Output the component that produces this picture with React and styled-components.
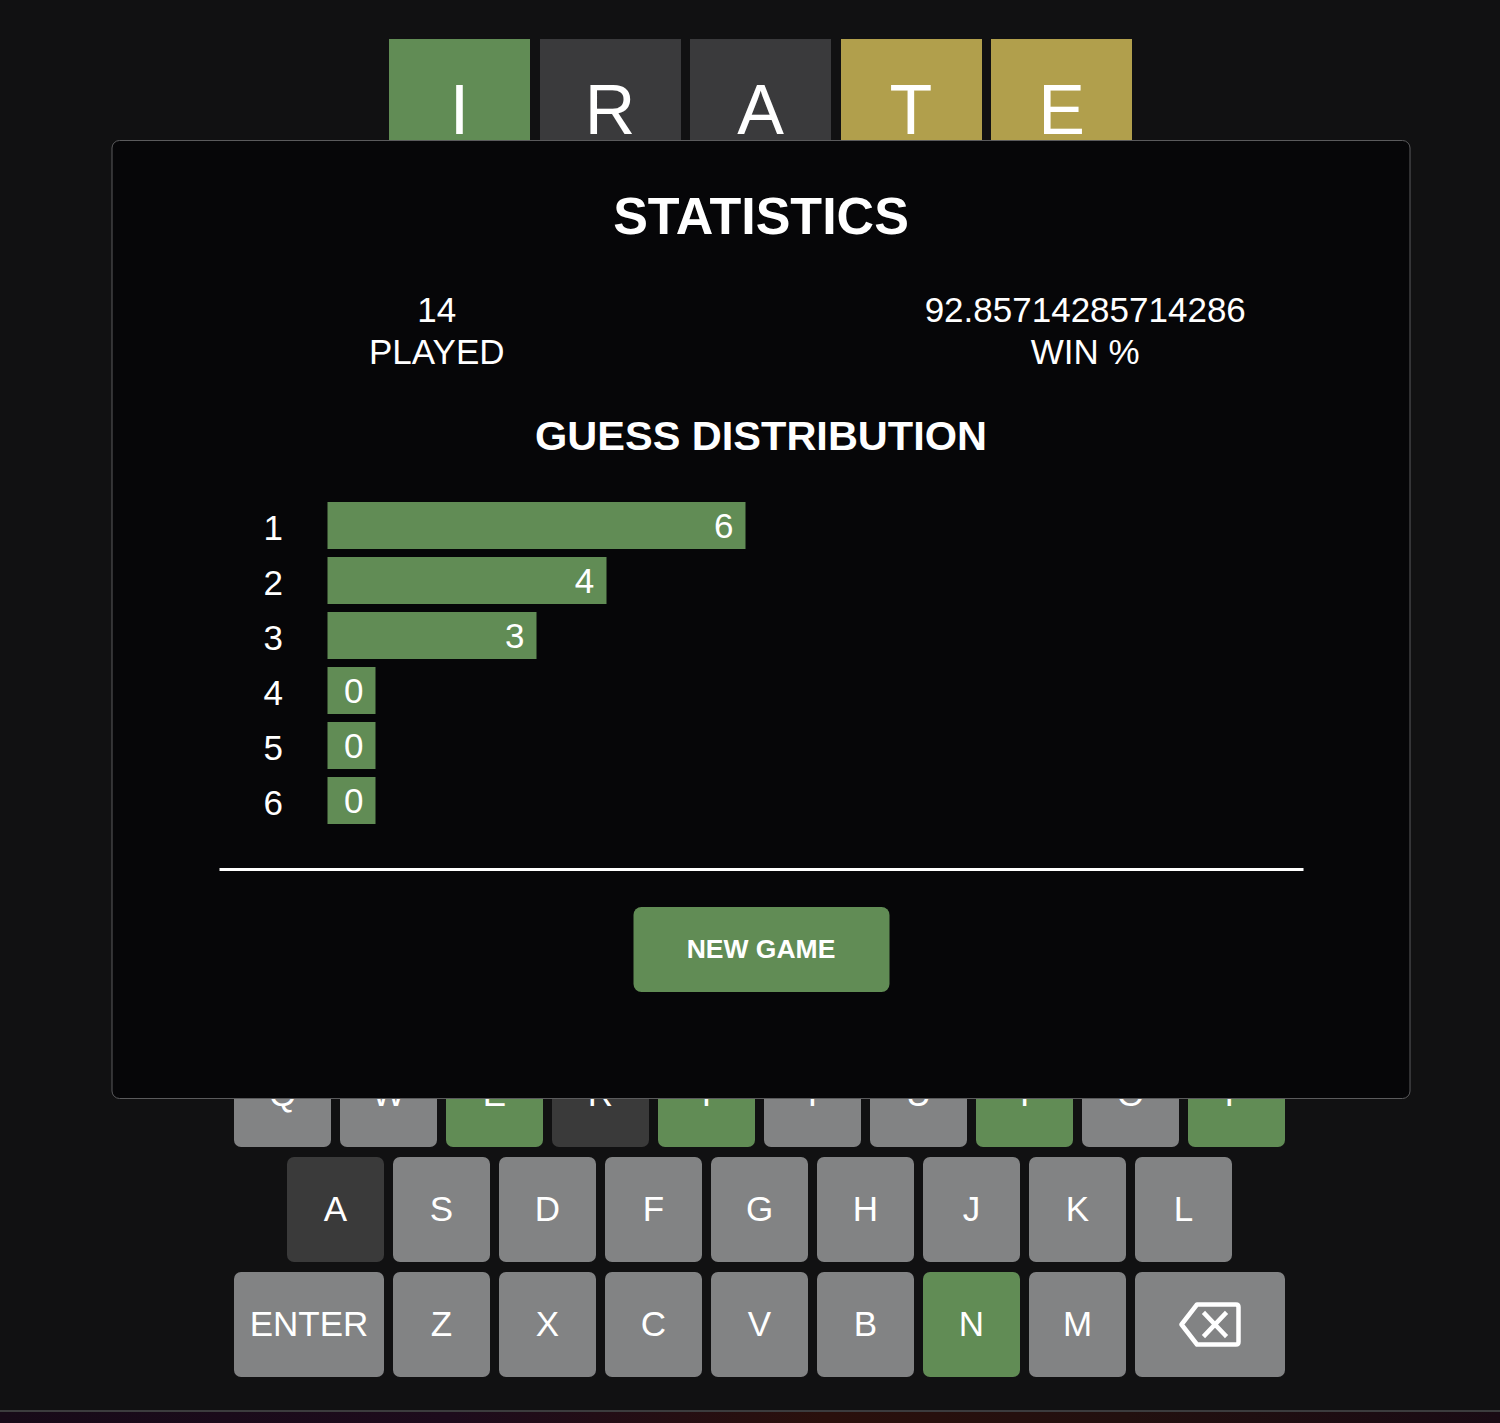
import React from 'react';
import styled, { createGlobalStyle } from 'styled-components';

const GlobalStyle = createGlobalStyle`
  html, body {
    margin: 0;
    padding: 0;
    background: #111112;
  }
  * {
    box-sizing: border-box;
  }
`;

const GREEN = '#618c55';
const YELLOW = '#b19f4c';
const DARK = '#3a3a3c';
const GRAY = '#828384';

const Page = styled.div`
  width: 1500px;
  height: 1423px;
  display: flex;
  flex-direction: column;
  background: #111112;
  font-family: 'Liberation Sans', Arial, sans-serif;
  color: #fff;
`;

const Main = styled.div`
  position: relative;
  height: 1410px;
  padding: 39px 0 33px 21px;
  display: flex;
  flex-direction: column;
  align-items: center;
  justify-content: space-between;
`;

const Board = styled.div`
  display: flex;
  flex-direction: column;
  gap: 9.5px;
`;

const BoardRow = styled.div`
  display: flex;
  gap: 9.5px;
`;

const Tile = styled.div`
  width: 141px;
  height: 141px;
  display: flex;
  align-items: center;
  justify-content: center;
  font-size: 70px;
  color: #fff;
  background: ${p => p.$bg || 'transparent'};
  border: ${p => (p.$bg ? 'none' : '2px solid #3a3a3c')};
`;

const Keyboard = styled.div`
  display: flex;
  flex-direction: column;
  gap: 10px;
  transform: translateX(-1px);
`;

const KeyRow = styled.div`
  display: flex;
  justify-content: center;
  gap: 9px;
`;

const Key = styled.button`
  width: ${p => (p.$wide ? '150px' : '97px')};
  height: 105px;
  border: none;
  border-radius: 7px;
  padding: 0 0 1px;
  display: flex;
  align-items: center;
  justify-content: center;
  background: ${p => p.$bg || GRAY};
  color: #fff;
  font-family: 'Liberation Sans', Arial, sans-serif;
  font-size: 35px;
`;

const Modal = styled.div`
  position: absolute;
  top: 140px;
  left: calc(50% + 11px);
  transform: translateX(-50%);
  width: 1299px;
  height: 959px;
  z-index: 10;
  background: #060608;
  border: 1px solid #5a5a5c;
  border-radius: 8px;
  padding-top: 45px;
  display: flex;
  flex-direction: column;
  align-items: center;
`;

const Title = styled.h1`
  margin: 0;
  font-size: 52px;
  line-height: 60px;
  font-weight: bold;
`;

const Stats = styled.div`
  margin-top: 43px;
  width: 100%;
  display: grid;
  grid-template-columns: 1fr 1fr;
`;

const Stat = styled.div`
  display: flex;
  flex-direction: column;
  align-items: center;
  font-size: 35px;
  line-height: 42px;
`;

const SubTitle = styled.h2`
  margin: 39px 0 0;
  font-size: 41.5px;
  line-height: 48px;
  font-weight: bold;
`;

const Distribution = styled.div`
  margin-top: 42px;
  width: 1084px;
  display: flex;
  flex-direction: column;
  gap: 8px;
`;

const DistRow = styled.div`
  display: grid;
  grid-template-columns: 10% 90%;
  align-items: center;
  height: 47px;
`;

const DistLabel = styled.div`
  text-align: center;
  font-size: 35px;
  padding-top: 4px;
`;

const Bar = styled.div`
  height: 47px;
  min-width: 48px;
  background: ${GREEN};
  display: flex;
  align-items: center;
  justify-content: flex-end;
  padding-right: 12px;
  font-size: 35px;
`;

const Divider = styled.div`
  margin-top: 44px;
  width: 1084px;
  height: 3px;
  background: #fff;
`;

const NewGame = styled.button`
  margin-top: 36px;
  width: 256px;
  height: 85px;
  border: none;
  border-radius: 8px;
  background: ${GREEN};
  color: #fff;
  font-family: 'Liberation Sans', Arial, sans-serif;
  font-size: 26.5px;
  font-weight: bold;
`;

const Footer = styled.div`
  flex: 1;
  border-top: 2px solid #3c3c3e;
  background: linear-gradient(90deg, #170a18 0%, #1d0b1c 30%, #2a100c 55%, #22100f 75%, #190a14 100%);
`;

const firstGuess = [
  { l: 'I', bg: GREEN },
  { l: 'R', bg: DARK },
  { l: 'A', bg: DARK },
  { l: 'T', bg: YELLOW },
  { l: 'E', bg: YELLOW },
];

const keyColors = {
  E: GREEN, T: GREEN, I: GREEN, P: GREEN, N: GREEN,
  R: '#3a3a3a', A: '#3a3a3a',
};

const rows = [
  ['Q', 'W', 'E', 'R', 'T', 'Y', 'U', 'I', 'O', 'P'],
  ['A', 'S', 'D', 'F', 'G', 'H', 'J', 'K', 'L'],
  ['ENTER', 'Z', 'X', 'C', 'V', 'B', 'N', 'M', 'DEL'],
];

const guesses = [6, 4, 3, 0, 0, 0];
const played = 14;

function Backspace() {
  return (
    <svg width="62" height="45" viewBox="0 0 62 45" fill="none" stroke="#fff" strokeWidth="4.5" strokeLinejoin="round" strokeLinecap="square">
      <path d="M18 2.5 H57 Q59.5 2.5 59.5 5 V40 Q59.5 42.5 57 42.5 H18 L2.5 22.5 Z" />
      <path d="M26 12 L46 33 M46 12 L26 33" />
    </svg>
  );
}

export default function App() {
  return (
    <Page>
      <GlobalStyle />
      <Main>
        <Board>
          <BoardRow>
            {firstGuess.map((t, i) => (
              <Tile key={i} $bg={t.bg}>{t.l}</Tile>
            ))}
          </BoardRow>
          {[1, 2, 3, 4, 5].map(r => (
            <BoardRow key={r}>
              {[0, 1, 2, 3, 4].map(c => <Tile key={c} />)}
            </BoardRow>
          ))}
        </Board>

        <Keyboard>
          {rows.map((row, i) => (
            <KeyRow key={i}>
              {row.map(k => (
                <Key key={k} $wide={k === 'ENTER' || k === 'DEL'} $bg={keyColors[k]}>
                  {k === 'DEL' ? <Backspace /> : k}
                </Key>
              ))}
            </KeyRow>
          ))}
        </Keyboard>

        <Modal>
          <Title>STATISTICS</Title>
          <Stats>
            <Stat>
              <span>14</span>
              <span>PLAYED</span>
            </Stat>
            <Stat>
              <span>92.85714285714286</span>
              <span>WIN %</span>
            </Stat>
          </Stats>
          <SubTitle>GUESS DISTRIBUTION</SubTitle>
          <Distribution>
            {guesses.map((n, i) => (
              <DistRow key={i}>
                <DistLabel>{i + 1}</DistLabel>
                <Bar style={{ width: `${(n / played) * 100}%` }}>{n}</Bar>
              </DistRow>
            ))}
          </Distribution>
          <Divider />
          <NewGame>NEW GAME</NewGame>
        </Modal>
      </Main>
      <Footer />
    </Page>
  );
}
